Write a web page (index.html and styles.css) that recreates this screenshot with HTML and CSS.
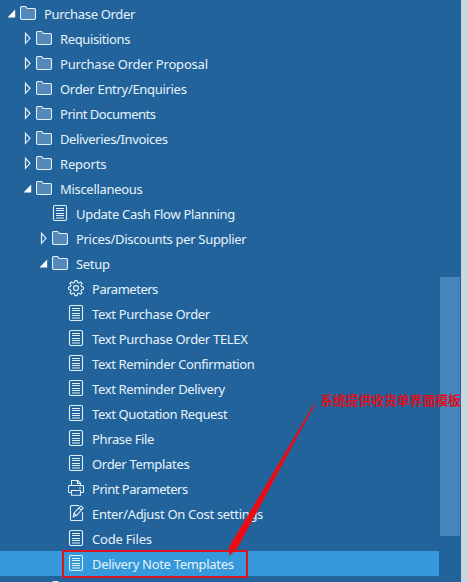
FILE: index.html
```html
<!DOCTYPE html>
<html lang="en">
<head>
<meta charset="utf-8">
<title>Purchase Order</title>
<link rel="stylesheet" href="styles.css">
</head>
<body>
<svg class="defs" aria-hidden="true">
  <symbol id="open" viewBox="0 0 9 25"><path d="M8.200 8.500v8H.5z" fill="#fff"/></symbol>
  <symbol id="closed" viewBox="0 0 9 25"><path d="M2.500 7.300v10L7 12.300z" fill="none" stroke="#e8f4fb" stroke-width="1.200"/></symbol>
  <symbol id="folder" viewBox="0 0 16 25"><path d="M.5 17V7Q.5 5.500 2 5.500h3.600l1.700 2h6.700q1.500 0 1.500 1.500v8q0 1.500-1.500 1.500H2Q.5 18.500.5 17z" fill="#5289ba" stroke="#e3f2fa" stroke-width="1.100"/></symbol>
  <symbol id="doc" viewBox="0 0 16 25"><g fill="none" stroke="#e3f2fa" stroke-width="1.100"><rect x="1.500" y="4.500" width="13" height="15" rx="1.500"/><path d="M4 7.500h8M4 9.500h8M4 12.500h8M4 14.500h8M4 17h8"/></g></symbol>
  <symbol id="gear" viewBox="0 0 16 25"><g fill="none" stroke="#e3f2fa" stroke-width="1.100" stroke-linejoin="round"><path d="M6.900 4.600h2.200l.5 2 1.200.5 1.800-1.100 1.500 1.500-1.100 1.800.5 1.200 2 .5v2.200l-2 .5-.5 1.200 1.100 1.800-1.500 1.500-1.800-1.100-1.200.5-.5 2H6.900l-.5-2-1.200-.5-1.800 1.100-1.500-1.500L3 14.900l-.5-1.200-2-.5V11l2-.5L3 9.300 1.900 7.500 3.400 6l1.800 1.100 1.200-.5z"/><circle cx="8" cy="12.100" r="2.500"/></g></symbol>
  <symbol id="printer" viewBox="0 0 16 25"><g fill="none" stroke="#e3f2fa" stroke-width="1.100"><path d="M3.500 9.500v-5h6.300l2.700 2.700v2.300M9.500 4.500v3h3M3.500 16.500h-2q-1 0-1-1v-5q0-1 1-1h13q1 0 1 1v5q0 1-1 1h-2M3.500 14.500h9v4.700h-9zM11 12h2"/></g></symbol>
  <symbol id="edit" viewBox="0 0 16 25"><g fill="none" stroke="#e3f2fa" stroke-width="1.100"><path d="M11 4.500H3.500q-1 0-1 1v13q0 1 1 1h10q1 0 1-1V11"/><path d="M5.300 15.800l.7-3.600 6.300-6.800q.7-.7 1.400 0l1 .9q.7.700 0 1.400l-6.200 6.900zM11 6.900l2.400 2.200M6 12.200l2.500 2.400"/></g></symbol>
</svg>
<main class="panel">
  <ul class="tree">
    <li class="row l0"><svg class="arrow"><use href="#open"/></svg><svg class="icon"><use href="#folder"/></svg><span>Purchase Order</span></li>
    <li class="row l1 snug"><svg class="arrow"><use href="#closed"/></svg><svg class="icon"><use href="#folder"/></svg><span>Requisitions</span></li>
    <li class="row l1 loose"><svg class="arrow"><use href="#closed"/></svg><svg class="icon"><use href="#folder"/></svg><span>Purchase Order Proposal</span></li>
    <li class="row l1"><svg class="arrow"><use href="#closed"/></svg><svg class="icon"><use href="#folder"/></svg><span>Order Entry/Enquiries</span></li>
    <li class="row l1 tight"><svg class="arrow"><use href="#closed"/></svg><svg class="icon"><use href="#folder"/></svg><span>Print Documents</span></li>
    <li class="row l1 snug"><svg class="arrow"><use href="#closed"/></svg><svg class="icon"><use href="#folder"/></svg><span>Deliveries/Invoices</span></li>
    <li class="row l1 loose"><svg class="arrow"><use href="#closed"/></svg><svg class="icon"><use href="#folder"/></svg><span>Reports</span></li>
    <li class="row l1"><svg class="arrow"><use href="#open"/></svg><svg class="icon"><use href="#folder"/></svg><span>Miscellaneous</span></li>
    <li class="row l2"><svg class="arrow"></svg><svg class="icon"><use href="#doc"/></svg><span>Update Cash Flow Planning</span></li>
    <li class="row l2"><svg class="arrow"><use href="#closed"/></svg><svg class="icon"><use href="#folder"/></svg><span>Prices/Discounts per Supplier</span></li>
    <li class="row l2"><svg class="arrow"><use href="#open"/></svg><svg class="icon"><use href="#folder"/></svg><span>Setup</span></li>
    <li class="row l3 tight"><svg class="arrow"></svg><svg class="icon"><use href="#gear"/></svg><span>Parameters</span></li>
    <li class="row l3"><svg class="arrow"></svg><svg class="icon"><use href="#doc"/></svg><span>Text Purchase Order</span></li>
    <li class="row l3"><svg class="arrow"></svg><svg class="icon"><use href="#doc"/></svg><span>Text Purchase Order TELEX</span></li>
    <li class="row l3 snug"><svg class="arrow"></svg><svg class="icon"><use href="#doc"/></svg><span>Text Reminder Confirmation</span></li>
    <li class="row l3 snug"><svg class="arrow"></svg><svg class="icon"><use href="#doc"/></svg><span>Text Reminder Delivery</span></li>
    <li class="row l3 snug"><svg class="arrow"></svg><svg class="icon"><use href="#doc"/></svg><span>Text Quotation Request</span></li>
    <li class="row l3 snug"><svg class="arrow"></svg><svg class="icon"><use href="#doc"/></svg><span>Phrase File</span></li>
    <li class="row l3"><svg class="arrow"></svg><svg class="icon"><use href="#doc"/></svg><span>Order Templates</span></li>
    <li class="row l3 tight"><svg class="arrow"></svg><svg class="icon"><use href="#printer"/></svg><span>Print Parameters</span></li>
    <li class="row l3"><svg class="arrow"></svg><svg class="icon"><use href="#edit"/></svg><span>Enter/Adjust On Cost settings</span></li>
    <li class="row l3 loose"><svg class="arrow"></svg><svg class="icon"><use href="#doc"/></svg><span>Code Files</span></li>
    <li class="row l3 selected"><svg class="arrow"></svg><svg class="icon"><use href="#doc"/></svg><span>Delivery Note Templates</span></li>
    <li class="row l2"><svg class="arrow"></svg><svg class="icon"><use href="#folder"/></svg></li>
  </ul>
  <div class="track"><div class="thumb"></div></div>
  <div class="edge"></div>
  <div class="frame"></div>
  <svg class="pointer" viewBox="0 0 468 582"><path d="M313.800 404.500L314.500 405 238 547 229.500 556 229 547z" fill="#ef0b12"/><path d="M314 405L240 535" stroke="#e01018" stroke-width="1.400"/></svg>
  <div class="note" lang="zh-CN">系统提供收货单界面模板</div>
</main>
</body>
</html>
```

FILE: styles.css
```css
body { margin: 0; overflow: hidden; background: #22639c; }
.defs { position: absolute; width: 0; height: 0; }
.panel {
  position: relative;
  display: flex;
  width: 468px;
  height: 582px;
  overflow: hidden;
  background: #22639c;
}
.tree {
  width: 439px;
  margin: 0;
  padding: 1px 0 0;
  list-style: none;
  font: 13px/25px "Noto Sans", sans-serif;
  letter-spacing: -0.31px;
  color: #e6f3fa;
}
.row { display: flex; height: 25px; white-space: nowrap; }
.row span { padding-top: 1px; height: 24px; }
.loose { letter-spacing: -0.2px; }
.snug { letter-spacing: -0.37px; }
.tight { letter-spacing: -0.48px; }
.l0 { padding-left: 7px; }
.l1 { padding-left: 23px; }
.l2 { padding-left: 39px; }
.l3 { padding-left: 55px; }
.arrow { flex: none; width: 9px; height: 25px; margin-right: 4px; }
.icon { flex: none; width: 16px; height: 25px; margin-right: 8px; }
.selected { background: #3498db; }
.track { width: 22px; padding: 277px 1px 0; box-sizing: border-box; }
.thumb { height: 259px; background: #4585b9; }
.edge { width: 7px; background: #c9d5df; }
.frame {
  position: absolute;
  left: 62px;
  top: 550px;
  width: 182px;
  height: 24px;
  border: 2px solid #dc1420;
}
.pointer { position: absolute; left: 0; top: 0; width: 468px; height: 582px; }
.note {
  position: absolute;
  left: 320px;
  top: 390px;
  font: bold 13px/20px "Noto Sans CJK SC", sans-serif;
  letter-spacing: -0.2px;
  white-space: nowrap;
  color: #d8121f;
}
```
